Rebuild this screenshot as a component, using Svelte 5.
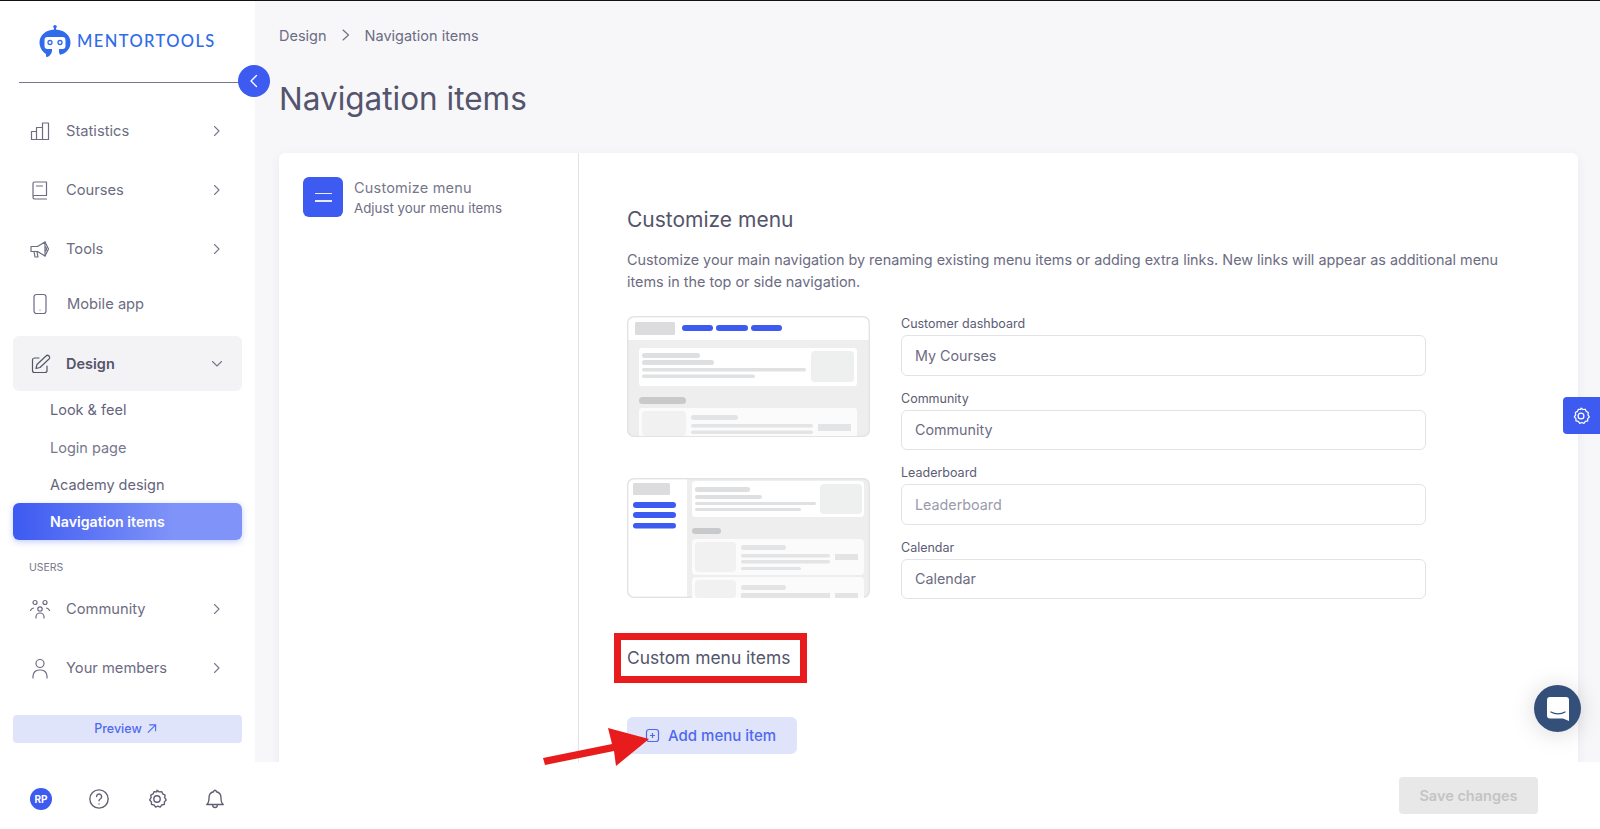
<script>
	const topNav = [
		{ label: 'Statistics', icon: 'stats' },
		{ label: 'Courses', icon: 'book' },
		{ label: 'Tools', icon: 'horn' }
	];
	const subNav = [
		{ label: 'Look & feel' },
		{ label: 'Login page', muted: true },
		{ label: 'Academy design' }
	];
	const userNav = [
		{ label: 'Community', icon: 'people' },
		{ label: 'Your members', icon: 'person' }
	];
	const fields = [
		{ label: 'Customer dashboard', value: 'My Courses' },
		{ label: 'Community', value: 'Community' },
		{ label: 'Leaderboard', placeholder: 'Leaderboard' },
		{ label: 'Calendar', value: 'Calendar' }
	];
</script>

{#snippet navIcon(name)}
	<svg class="nav-icon" viewBox="0 0 24 24" fill="none" stroke="currentColor" stroke-width="1.2" stroke-linecap="round" stroke-linejoin="round">
		{#if name === 'stats'}
			<path d="M3.5 12.5h5v8h-5zM8.500 8.500h6v12h-6zM14.500 4h6v16.500h-6z" />
		{:else if name === 'book'}
			<path d="M5 18V5.500A1.500 1.500 0 0 1 6.500 4h12v13.500H6.500A1.700 1.700 0 0 0 5 19.200 1.700 1.700 0 0 0 6.500 21h12M8.500 8h6" />
		{:else if name === 'horn'}
			<path d="M3 9.500h6.500L17 5v14l-7.500-4.500H3zM6 14.500 7 20h3l-1-5M17 9.500a2.800 2.800 0 0 1 0 5" />
			<path d="M17 5l3.500 7L17 19" />
		{:else if name === 'phone'}
			<rect x="6" y="2.500" width="12" height="19" rx="2.500" />
			<path d="M12 18h.01" />
		{:else if name === 'pencil'}
			<path d="M11 6H6.500A2 2 0 0 0 4.500 8v10.500a2 2 0 0 0 2 2H17a2 2 0 0 0 2-2V14" />
			<path d="M18 4a2 2 0 0 1 3 3L12 15.500l-4 1 1-4z" />
		{:else if name === 'people'}
			<circle cx="7" cy="5.500" r="2" /><circle cx="17" cy="5.500" r="2" /><circle cx="12" cy="12" r="2.200" />
			<path d="M2.500 13.500a4 4 0 0 1 3-2.500M21.500 13.500a4 4 0 0 0-3-2.500M8 21v-1a4 4 0 0 1 8 0v1" />
		{:else if name === 'person'}
			<circle cx="12" cy="7.500" r="4" />
			<path d="M5 22v-2a6 6 0 0 1 6-6h2a6 6 0 0 1 6 6v2" />
		{/if}
	</svg>
{/snippet}

{#snippet chevron()}
	<svg class="chevron" viewBox="0 0 12 12" fill="none" stroke="currentColor" stroke-width="1.100" stroke-linecap="round" stroke-linejoin="round">
		<path d="M3.500 1.500 8 6l-4.500 4.500" />
	</svg>
{/snippet}

{#snippet gear(size)}
	<svg width={size} height={size} viewBox="0 0 24 24" fill="none" stroke="currentColor" stroke-width="1.500" stroke-linejoin="round">
		<path d="M12 2.500l2.300 1.700 2.800-.3 1.200 2.600 2.500 1.300-.4 2.800 1.600 2.400-1.900 2.100-.1 2.800-2.800.6-1.700 2.300-2.500-1-2.500 1-1.700-2.300-2.800-.6-.1-2.800-1.900-2.100 1.600-2.400-.4-2.800 2.500-1.300 1.200-2.600 2.800.3z" />
		<circle cx="12" cy="12" r="3.500" />
	</svg>
{/snippet}

<div class="page">
	<aside class="sidebar">
		<div class="logo">
			<svg class="logo-mark" viewBox="0 0 32 32">
				<path fill="#2f6bea" d="M16 0c1 0 1.800.800 1.800 1.700 0 .600-.300 1.100-.800 1.400V4.500C25 5 31.500 10 31.500 17.500c0 5.500-3.500 10-8.500 11.800l-2 .500c-1-1.600-1.300-3.800-.800-5.800h3.300a3 3 0 0 0 3-3v-6a3 3 0 0 0-3-3H8.500a3 3 0 0 0-3 3v6a3 3 0 0 0 3 3H13c.400 3-1 6-4 7.800-1 .500-2 .200-2-.900V29C3 26.500.500 22 .500 17.500.500 10 7 5 15 4.500V3.100c-.500-.300-.800-.800-.800-1.400C14.200.800 15 0 16 0z" />
				<circle cx="11" cy="17.500" r="2" fill="none" stroke="#2f6bea" stroke-width="1.300" />
				<circle cx="21" cy="17.500" r="2" fill="none" stroke="#2f6bea" stroke-width="1.300" />
			</svg>
			<span class="logo-text">MENTORTOOLS</span>
		</div>
		<div class="rule"></div>

		<nav class="nav">
			{#each topNav as item}
				<div class="nav-row">
					{@render navIcon(item.icon)}
					<span>{item.label}</span>
					{@render chevron()}
				</div>
			{/each}
			<div class="nav-row short">
				{@render navIcon('phone')}
				<span class="nudge">Mobile app</span>
			</div>
			<div class="nav-row open">
				{@render navIcon('pencil')}
				<span>Design</span>
				<svg class="chevron" viewBox="0 0 12 12" fill="none" stroke="currentColor" stroke-width="1.100" stroke-linecap="round" stroke-linejoin="round">
					<path d="M1.500 3.500 6 8l4.500-4.500" />
				</svg>
			</div>
			<div class="sub-nav">
				{#each subNav as item}
					<div class="sub-item" class:muted={item.muted}>{item.label}</div>
				{/each}
				<div class="sub-item active">Navigation items</div>
			</div>
			<div class="nav-title">USERS</div>
			{#each userNav as item}
				<div class="nav-row">
					{@render navIcon(item.icon)}
					<span>{item.label}</span>
					{@render chevron()}
				</div>
			{/each}
		</nav>

		<div class="preview">
			Preview
			<svg width="11" height="11" viewBox="0 0 12 12" fill="none" stroke="currentColor" stroke-width="1.200">
				<path d="M2 10.500 10 2.500M3.500 2h7v7" />
			</svg>
		</div>

		<div class="tools">
			<div class="avatar">RP</div>
			<svg width="22" height="22" viewBox="0 0 24 24" fill="none" stroke="currentColor" stroke-width="1.500" stroke-linecap="round">
				<circle cx="12" cy="12" r="10" />
				<path d="M9.300 9.300a2.800 2.800 0 1 1 4.300 2.400c-1 .600-1.600 1.200-1.600 2.300M12 17.500h.01" />
			</svg>
			{@render gear(22)}
			<svg width="22" height="22" viewBox="0 0 24 24" fill="none" stroke="currentColor" stroke-width="1.500" stroke-linecap="round" stroke-linejoin="round">
				<path d="M12 2.500a1.500 1.500 0 0 1 1.500 1.600A6.500 6.500 0 0 1 18.500 10.500c0 4 .700 6 2.500 7.500H3c1.800-1.500 2.500-3.500 2.500-7.500a6.500 6.500 0 0 1 5-6.400A1.500 1.500 0 0 1 12 2.500zM9.500 18v.800a2.500 2.500 0 0 0 5 0V18" />
			</svg>
		</div>

		<button class="collapse" aria-label="Collapse">
			<svg width="12" height="14" viewBox="0 0 12 14" fill="none" stroke="#fff" stroke-width="1.300" stroke-linecap="round" stroke-linejoin="round">
				<path d="M8.500 1.500 3 7l5.500 5.500" />
			</svg>
		</button>
	</aside>

	<main class="main">
		<div class="scroll">
			<div class="crumbs">
				<span>Design</span>
				<svg width="12" height="12" viewBox="0 0 12 12" fill="none" stroke="currentColor" stroke-width="1.100" stroke-linecap="round" stroke-linejoin="round">
					<path d="M3 1 8.500 6 3 11" />
				</svg>
				<span>Navigation items</span>
			</div>
			<h1>Navigation items</h1>

			<section class="card">
				<div class="steps">
					<div class="step-icon"><span></span><span></span></div>
					<div class="step-text">
						<div class="step-title">Customize menu</div>
						<div class="step-sub">Adjust your menu items</div>
					</div>
				</div>

				<div class="body">
					<h2>Customize menu</h2>
					<p>Customize your main navigation by renaming existing menu items or adding extra links. New links will appear as additional menu items in the top or side navigation.</p>

					<div class="config">
						<div class="previews">
							<svg class="shot" viewBox="0 0 243 121">
								<rect x=".75" y=".75" width="241.500" height="119.500" rx="6" fill="#eeeeee" stroke="#e3e3e4" stroke-width="1.500" />
								<path d="M1.500 7a5.500 5.500 0 0 1 5.500-5.500h229a5.500 5.500 0 0 1 5.500 5.500v17H1.500z" fill="#fff" />
								<rect x="8" y="6" width="40" height="13" rx="1.500" fill="#dcdcde" />
								<rect x="55" y="9" width="31" height="6" rx="3" fill="#3d5af1" />
								<rect x="89" y="9" width="32" height="6" rx="3" fill="#3d5af1" />
								<rect x="124" y="9" width="31" height="6" rx="3" fill="#3d5af1" />
								<rect x="12" y="32" width="218" height="38" rx="3" fill="#fff" />
								<rect x="15" y="37" width="58" height="5" rx="2.500" fill="#dedfe0" />
								<rect x="15" y="44" width="72" height="5" rx="2.500" fill="#dedfe0" />
								<rect x="15" y="52" width="164" height="3.500" rx="1.700" fill="#e0e1e2" />
								<rect x="15" y="58.500" width="113" height="3.500" rx="1.700" fill="#e0e1e2" />
								<rect x="184" y="35" width="43" height="31" rx="4" fill="#eeefef" />
								<rect x="12" y="81" width="47" height="7" rx="3.500" fill="#c8c9ca" />
								<path d="M12 120V95a3 3 0 0 1 3-3h212a3 3 0 0 1 3 3v25z" fill="#fbfbfb" />
								<rect x="15" y="95" width="44" height="25" rx="4" fill="#f1f1f1" />
								<rect x="64" y="99" width="47" height="5" rx="2.500" fill="#e3e4e5" />
								<rect x="64" y="108" width="122" height="3.500" rx="1.700" fill="#e3e4e5" />
								<rect x="64" y="114.500" width="122" height="3.500" rx="1.700" fill="#e3e4e5" />
								<rect x="191" y="108" width="33" height="7" fill="#e3e4e5" />
							</svg>
							<svg class="shot" viewBox="0 0 243 120">
								<rect x=".75" y=".75" width="241.500" height="118.500" rx="6" fill="#eeeeee" stroke="#e3e3e4" stroke-width="1.500" />
								<path d="M1.500 7a5.500 5.500 0 0 1 5.500-5.500h53v117H7a5.500 5.500 0 0 1-5.500-5.500z" fill="#fff" />
								<rect x="6" y="5" width="37" height="12" rx="1.500" fill="#dcdcde" />
								<rect x="6" y="24" width="43" height="6" rx="3" fill="#3d5af1" />
								<rect x="6" y="34" width="43" height="6" rx="3" fill="#3d5af1" />
								<rect x="6" y="45" width="43" height="5.500" rx="2.700" fill="#3d5af1" />
								<rect x="65" y="3" width="172" height="36" rx="4" fill="#fff" />
								<rect x="68" y="9" width="55" height="5" rx="2.500" fill="#dedfe0" />
								<rect x="68" y="17" width="67" height="4" rx="2" fill="#dedfe0" />
								<rect x="68" y="24" width="121" height="3" rx="1.500" fill="#e0e1e2" />
								<rect x="68" y="30" width="106" height="3" rx="1.500" fill="#e0e1e2" />
								<rect x="193" y="6" width="42" height="30" rx="4" fill="#eeefef" />
								<rect x="65" y="50" width="29" height="6" rx="3" fill="#c8c9ca" />
								<rect x="65" y="61" width="172" height="36" rx="4" fill="#fbfbfb" />
								<rect x="68" y="64" width="41" height="30" rx="4" fill="#f1f1f1" />
								<rect x="114" y="67" width="45" height="5" rx="2.500" fill="#e3e4e5" />
								<rect x="114" y="76" width="89" height="3.500" rx="1.700" fill="#e3e4e5" />
								<rect x="114" y="82" width="89" height="3.500" rx="1.700" fill="#e3e4e5" />
								<rect x="114" y="89" width="60" height="3" rx="1.500" fill="#e3e4e5" />
								<rect x="208" y="76" width="23" height="6" fill="#e3e4e5" />
								<path d="M65 120v-17a4 4 0 0 1 4-4h164a4 4 0 0 1 4 4v17z" fill="#fbfbfb" />
								<rect x="68" y="102" width="41" height="18" rx="4" fill="#f1f1f1" />
								<rect x="114" y="107" width="45" height="5" rx="2.500" fill="#e3e4e5" />
								<rect x="114" y="115" width="89" height="5" fill="#e3e4e5" />
								<rect x="208" y="115" width="23" height="5" fill="#e3e4e5" />
							</svg>
						</div>
						<div class="fields">
							{#each fields as field}
								<label class="field">
									<span>{field.label}</span>
									<input type="text" value={field.value ?? ''} placeholder={field.placeholder ?? ''} />
								</label>
							{/each}
						</div>
					</div>

					<h2 class="custom">Custom menu items</h2>
					<button class="add">
						<svg width="15" height="15" viewBox="0 0 15 15" fill="none" stroke="currentColor" stroke-width="1.200">
							<rect x="1.500" y="1.500" width="12" height="12" rx="2.500" />
							<path d="M7.500 5v5M5 7.500h5" />
						</svg>
						Add menu item
					</button>
				</div>
			</section>
		</div>

		<footer class="footer">
			<button class="save">Save changes</button>
		</footer>
	</main>

	<!-- annotations and floating widgets over the page -->
	<div class="highlight"></div>
	<svg class="arrow" viewBox="0 0 110 42">
		<path d="M0 31 69 17 65 1 106 12 73 39 71 24 2 38z" fill="#e81c1c" />
	</svg>
	<div class="gear-tab">{@render gear(20)}</div>
	<div class="chat">
		<svg width="24" height="26" viewBox="0 0 24 26">
			<path d="M4 1h16a3 3 0 0 1 3 3v21l-6-2.500H4a3 3 0 0 1-3-3V4a3 3 0 0 1 3-3z" fill="#fff" />
			<path d="M5 16c4 2.500 10 2.500 14 0" fill="none" stroke="#34507a" stroke-width="1.300" stroke-linecap="round" />
		</svg>
	</div>
</div>

<style>
	:global(body) {
		margin: 0;
		font-family: Inter, 'Noto Sans', sans-serif;
		color: #5a5a72;
	}

	.page {
		position: relative;
		display: flex;
		height: 828px;
		overflow: hidden;
		border-top: 1px solid #0c1512;
		background: #fff;
	}

	button {
		font: inherit;
		border: none;
	}

	/* sidebar */
	.sidebar {
		position: relative;
		box-sizing: border-box;
		width: 255px;
		flex: none;
		display: flex;
		flex-direction: column;
		padding: 0 13px;
		background: #fff;
		z-index: 2;
	}

	.logo {
		display: flex;
		align-items: center;
		gap: 6px;
		height: 55px;
		padding: 12px 0 0 26px;
		box-sizing: content-box;
	}

	.logo-mark {
		width: 32px;
		height: 32px;
	}

	.logo-text {
		font-family: Lato, sans-serif;
		font-size: 16.500px;
		font-weight: 500;
		letter-spacing: 1.400px;
		color: #2f6bea;
	}

	.rule {
		height: 1px;
		margin: 14px -7px 0 6px;
		background: #77778f;
	}

	.nav {
		display: flex;
		flex-direction: column;
		margin-top: 18px;
	}

	.nav-row {
		display: flex;
		align-items: center;
		height: 59px;
		padding: 0 19px 0 15px;
		font-size: 14.700px;
		color: #6c6c82;
		flex: none;
	}

	.nav-row span {
		flex: 1;
		margin-left: 14px;
	}

	.nav-row .nudge {
		margin-left: 15px;
	}

	.nav-row.short {
		height: 52px;
	}

	.nav-icon {
		width: 24px;
		height: 24px;
		flex: none;
	}

	.chevron {
		width: 12px;
		height: 12px;
		flex: none;
		color: #77778a;
	}

	.nav-row.open {
		height: 55px;
		margin-top: 6px;
		border-radius: 6px;
		background: #f3f3f5;
		color: #55556c;
		font-size: 14.500px;
		font-weight: 600;
	}

	.sub-nav {
		display: flex;
		flex-direction: column;
	}

	.sub-item {
		height: 37.500px;
		display: flex;
		align-items: center;
		padding-left: 37px;
		font-size: 14.500px;
		color: #64647c;
	}

	.sub-item.muted {
		color: #77778e;
	}

	.sub-item.active {
		height: 37px;
		margin-top: -0.500px;
		border-radius: 6px;
		background: linear-gradient(90deg, #3d5af1, #7f93f8 70%);
		box-shadow: 0 2px 6px rgba(61, 90, 241, 0.3);
		color: #fff;
		font-size: 14.200px;
		font-weight: 600;
	}

	.nav-title {
		margin: 19.500px 0 0 16px;
		height: 16px;
		font-size: 10.500px;
		line-height: 16px;
		color: #77778e;
	}

	.nav-title + .nav-row {
		margin-top: 4px;
	}

	.preview {
		display: flex;
		align-items: center;
		justify-content: center;
		gap: 4px;
		height: 28px;
		margin-top: 17px;
		padding-right: 4px;
		border-radius: 4px;
		background: #e0e4fb;
		color: #4f69ee;
		font-size: 12.500px;
		font-weight: 500;
	}

	.tools {
		display: flex;
		align-items: center;
		justify-content: space-between;
		margin-top: 45px;
		padding: 0 16px 0 17px;
		color: #5f5f74;
	}

	.avatar {
		display: flex;
		align-items: center;
		justify-content: center;
		width: 22px;
		height: 22px;
		border-radius: 50%;
		background: #3d5af1;
		color: #fff;
		font-size: 10px;
		font-weight: 700;
	}

	.collapse {
		position: absolute;
		top: 64px;
		right: -15px;
		width: 32px;
		height: 32px;
		display: flex;
		align-items: center;
		justify-content: center;
		padding: 0;
		border-radius: 50%;
		background: #3d5af1;
	}

	/* main */
	.main {
		flex: 1;
		min-width: 0;
		display: flex;
		flex-direction: column;
		background: #f7f7fa;
	}

	.scroll {
		flex: 1;
		min-height: 0;
		overflow: hidden;
		padding: 0 22px 0 24px;
	}

	.crumbs {
		display: flex;
		align-items: center;
		gap: 13px;
		height: 20px;
		margin-top: 24px;
		font-size: 14.500px;
		color: #6c6c82;
	}

	h1 {
		margin: 29px 0 0;
		font-size: 31.500px;
		line-height: 50px;
		font-weight: 400;
		color: #54546c;
	}

	.card {
		display: flex;
		height: 640px;
		margin-top: 29px;
		border-radius: 6px;
		background: #fff;
		box-shadow: 0 2px 12px rgba(40, 40, 80, 0.05);
	}

	.steps {
		box-sizing: border-box;
		width: 300px;
		flex: none;
		display: flex;
		align-items: flex-start;
		gap: 11px;
		padding: 24px 0 0 24px;
		border-right: 1px solid #e3e3e6;
	}

	.step-icon {
		display: flex;
		flex-direction: column;
		align-items: center;
		justify-content: center;
		gap: 6px;
		width: 40px;
		height: 40px;
		border-radius: 6px;
		background: #3d5af1;
	}

	.step-icon span {
		width: 17px;
		height: 1.500px;
		background: #e8ebfe;
	}

	.step-title {
		margin-top: 1px;
		font-size: 14.500px;
		letter-spacing: 0.200px;
		line-height: 20px;
		color: #77778c;
	}

	.step-sub {
		font-size: 13.300px;
		line-height: 20px;
		color: #6e6e84;
	}

	.body {
		flex: 1;
		min-width: 0;
		padding: 53px 48px 0;
	}

	h2 {
		margin: 0;
		font-size: 21px;
		line-height: 28px;
		font-weight: 400;
		color: #54546c;
	}

	p {
		margin: 15px 0 0;
		max-width: 880px;
		font-size: 14.400px;
		line-height: 22px;
		color: #6c6c82;
	}

	.config {
		display: flex;
		gap: 31px;
		margin-top: 23px;
	}

	.previews {
		display: flex;
		flex-direction: column;
		gap: 41px;
		width: 243px;
		flex: none;
	}

	.shot {
		display: block;
		width: 243px;
	}

	.fields {
		width: 525px;
		display: flex;
		flex-direction: column;
		gap: 15px;
	}

	.field {
		display: flex;
		flex-direction: column;
	}

	.field span {
		height: 19px;
		font-size: 12.500px;
		line-height: 16px;
		color: #5c5c74;
	}

	input {
		box-sizing: border-box;
		width: 100%;
		height: 40.500px;
		padding: 0 13px;
		border: 1.500px solid #e3e3e6;
		border-radius: 6px;
		background: #fff;
		font: inherit;
		font-size: 14.300px;
		color: #6c6c82;
		outline: none;
	}

	input::placeholder {
		color: #9a9aad;
		opacity: 1;
	}

	h2.custom {
		margin-top: 47px;
		font-size: 17.400px;
		line-height: 24px;
	}

	.add {
		display: flex;
		align-items: center;
		gap: 8px;
		height: 37px;
		margin-top: 47px;
		padding: 0 21px 0 18px;
		border-radius: 6px;
		background: #e0e4fb;
		color: #4f69ee;
		font-size: 15px;
		font-weight: 500;
	}

	.footer {
		flex: none;
		display: flex;
		align-items: center;
		justify-content: flex-end;
		height: 67px;
		padding-right: 62px;
		background: #fff;
		position: relative;
	}

	.save {
		width: 139px;
		height: 37px;
		border-radius: 4px;
		background: #e8e8e8;
		color: #c4c4c4;
		font-size: 14.500px;
		font-weight: 600;
	}

	/* overlays */
	.highlight {
		position: absolute;
		left: 614px;
		top: 632px;
		width: 193px;
		height: 50px;
		box-sizing: border-box;
		border: 7px solid #e81c1c;
	}

	.arrow {
		position: absolute;
		left: 543px;
		top: 726px;
		width: 110px;
		height: 42px;
	}

	.gear-tab {
		position: absolute;
		right: 0;
		top: 396px;
		width: 37px;
		height: 37px;
		display: flex;
		align-items: center;
		justify-content: flex-start;
		padding-left: 8px;
		box-sizing: border-box;
		border-radius: 4px 0 0 4px;
		background: #3d5af1;
		color: #fff;
	}

	.chat {
		position: absolute;
		left: 1534px;
		top: 684px;
		width: 47px;
		height: 47px;
		display: flex;
		align-items: center;
		justify-content: center;
		border-radius: 50%;
		background: #34507a;
		box-shadow: 0 2px 24px rgba(0, 0, 0, 0.15);
	}
</style>
